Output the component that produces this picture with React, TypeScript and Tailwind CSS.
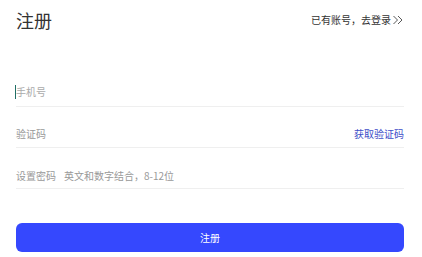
import React from "react";

export default function App() {
  return (
    <div className="w-[422px] h-[257px] bg-white pl-4 pr-[18px] font-['Noto_Sans_CJK_SC','Noto_Sans',sans-serif]">
      <div className="h-[39px] flex items-center justify-between">
        <div className="text-[18px] leading-none text-[#333] pt-[1px]">注册</div>
        <div className="flex items-center text-[10px] leading-none text-[#333] pt-[1px]">
          <span>已有账号，去登录</span>
          <svg width="12" height="10" viewBox="0 0 12 10" className="ml-[1px]" fill="none" stroke="#444" strokeWidth="0.9">
            <polyline points="1.5,1 5.5,5 1.5,9" />
            <polyline points="6,1 10,5 6,9" />
          </svg>
        </div>
      </div>

      <div className="mt-[27px] h-[41px] border-b border-[#efefef] flex items-end pb-[7px]">
        <div className="flex items-center text-[10px] leading-[12px] text-[#aaaaaa]">
          <span className="-ml-[1px] w-[1px] h-[14px] bg-[#1f6f66]" />
          <span>手机号</span>
        </div>
      </div>

      <div className="h-[41px] border-b border-[#efefef] flex items-end justify-between pb-[7px]">
        <span className="text-[10px] leading-[12px] text-[#999]">验证码</span>
        <span className="text-[10px] leading-[12px] text-[#3d4ec8]">获取验证码</span>
      </div>

      <div className="h-[41px] border-b border-[#efefef] flex items-end pb-[6px] text-[10px] leading-[12px] text-[#999]">
        <span>设置密码</span>
        <span className="ml-2">英文和数字结合，8-12位</span>
      </div>

      <button className="mt-[34px] w-full h-[29px] rounded-[6px] bg-[#3548fe] text-white text-[10px] leading-none flex items-center justify-center">
        注册
      </button>
    </div>
  );
}
